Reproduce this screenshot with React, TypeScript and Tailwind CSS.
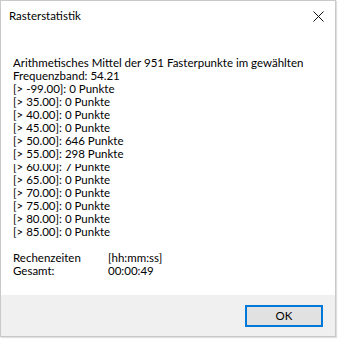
import React from 'react'

const rows: [string, string][] = [
  ['-99.00', '0'],
  ['35.00', '0'],
  ['40.00', '0'],
  ['45.00', '0'],
  ['50.00', '646'],
  ['55.00', '298'],
  ['60.00', '7'],
  ['65.00', '0'],
  ['70.00', '0'],
  ['75.00', '0'],
  ['80.00', '0'],
  ['85.00', '0'],
]

export default function App() {
  return (
    <div className="h-[339px] w-[339px] bg-white font-['Lato',sans-serif] text-[11.5px] text-black">
      <div className="flex h-[337px] w-[336px] flex-col border border-[#c9c9c9] bg-white shadow-[1px_1px_1px_rgba(0,0,0,0.12)]">
        {/* title bar */}
        <div className="flex h-[30px] shrink-0 items-center justify-between pl-[8px] pr-[10px]">
          <span className="leading-none">Rasterstatistik</span>
          <svg width="11" height="11" viewBox="0 0 11 11" className="mr-[1px]">
            <path d="M0.5 0.5 L10.5 10.5 M10.5 0.5 L0.5 10.5" stroke="#111" strokeWidth="1" fill="none" />
          </svg>
        </div>

        {/* content */}
        <div className="flex-1 whitespace-nowrap pl-[12px] pt-[25px] leading-[13px]">
          <div>Arithmetisches Mittel der 951 Fasterpunkte im gewählten</div>
          <div>Frequenzband: 54.21</div>
          {rows.map(([v, n]) => (
            <div key={v} className={v === '60.00' ? '[clip-path:inset(4px_0_0_0)]' : ''}>
              [&gt; {v}]: {n} Punkte
            </div>
          ))}
          <div className="h-[13px]" />
          <div className="flex">
            <span className="w-[95px]">Rechenzeiten</span>
            <span>[hh:mm:ss]</span>
          </div>
          <div className="flex">
            <span className="w-[95px]">Gesamt:</span>
            <span>00:00:49</span>
          </div>
        </div>

        {/* footer */}
        <div className="flex h-[41px] shrink-0 items-start justify-end bg-[#f0f0f0] pr-[12px] pt-[10px]">
          <button className="flex h-[22px] w-[78px] items-center justify-center border-2 border-[#0078d7] bg-[#e1e1e1] leading-none">
            OK
          </button>
        </div>
      </div>
    </div>
  )
}
